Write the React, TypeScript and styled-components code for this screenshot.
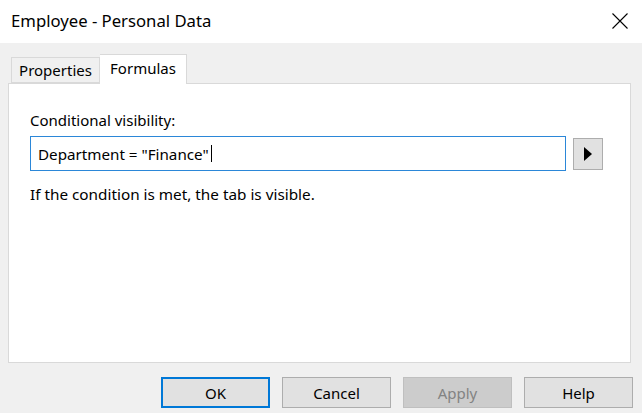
import React from "react";
import styled, { createGlobalStyle } from "styled-components";

const GlobalStyle = createGlobalStyle`
  html, body {
    margin: 0;
    padding: 0;
    background: #f0f0f0;
  }
  body {
    font-family: "Segoe UI", "Noto Sans", "DejaVu Sans", sans-serif;
    color: #000;
  }
`;

const Window = styled.div`
  width: 642px;
  height: 413px;
  background: #f0f0f0;
  display: flex;
  flex-direction: column;
  overflow: hidden;
`;

const TitleBar = styled.div`
  height: 43px;
  background: #ffffff;
  display: flex;
  align-items: center;
  justify-content: space-between;
  padding-left: 11px;
  box-sizing: border-box;
`;

const Title = styled.div`
  font-size: 16.7px;
  line-height: 22px;
  padding-bottom: 2px;
`;

const CloseButton = styled.button`
  width: 30px;
  height: 30px;
  margin-right: 7px;
  margin-bottom: 2px;
  border: none;
  background: transparent;
  display: flex;
  align-items: center;
  justify-content: center;
  padding: 0;
`;

const Body = styled.div`
  flex: 1;
  display: flex;
  flex-direction: column;
  padding: 11px 9px 0 8px;
`;

const TabStrip = styled.div`
  display: flex;
  align-items: flex-end;
  height: 29px;
  padding-left: 3px;
`;

const Tab = styled.div<{ $active?: boolean }>`
  box-sizing: border-box;
  height: ${(p) => (p.$active ? "30px" : "26px")};
  width: ${(p) => (p.$active ? "87px" : "89px")};
  margin-bottom: ${(p) => (p.$active ? "-1px" : "0")};
  background: ${(p) => (p.$active ? "#ffffff" : "#f0f0f0")};
  border: 1px solid #d9d9d9;
  border-bottom: ${(p) => (p.$active ? "none" : "1px solid #d9d9d9")};
  border-left: ${(p) => (p.$active ? "none" : "1px solid #d9d9d9")};
  font-size: 15px;
  display: flex;
  align-items: center;
  justify-content: center;
  padding-bottom: ${(p) => (p.$active ? "3px" : "0")};
  position: relative;
  z-index: ${(p) => (p.$active ? 1 : 0)};
`;

const Panel = styled.div`
  box-sizing: border-box;
  width: 623px;
  height: 280px;
  background: #ffffff;
  border: 1px solid #d9d9d9;
  padding: 27px 0 0 21px;
  display: flex;
  flex-direction: column;
`;

const FieldLabel = styled.div`
  font-size: 15px;
  line-height: 18px;
`;

const FieldRow = styled.div`
  display: flex;
  align-items: center;
  gap: 7px;
  margin-top: 7px;
`;

const FormulaInput = styled.div`
  box-sizing: border-box;
  width: 536px;
  height: 35px;
  border: 1px solid #2b87d8;
  background: #fff;
  display: flex;
  align-items: center;
  padding-left: 7px;
  font-size: 15.2px;
`;

const Caret = styled.span`
  display: inline-block;
  width: 1px;
  height: 17px;
  background: #000;
  margin-left: 2px;
`;

const ArrowButton = styled.button`
  box-sizing: border-box;
  width: 30px;
  height: 32px;
  background: #e1e1e1;
  border: 1px solid #adadad;
  padding: 0;
  display: flex;
  align-items: center;
  justify-content: center;
`;

const Hint = styled.div`
  font-size: 15.3px;
  line-height: 18px;
  margin-top: 14px;
`;

const ButtonRow = styled.div`
  display: flex;
  justify-content: flex-end;
  gap: 12px;
  margin-top: 14px;
`;

const DialogButton = styled.button<{ $default?: boolean; $disabled?: boolean }>`
  box-sizing: border-box;
  width: 109px;
  height: 31px;
  font-family: inherit;
  font-size: 15px;
  padding: 0;
  background: ${(p) => (p.$disabled ? "#cccccc" : "#e1e1e1")};
  color: ${(p) => (p.$disabled ? "#838383" : "#000000")};
  border: ${(p) =>
    p.$default ? "2px solid #0078d7" : p.$disabled ? "1px solid #bfbfbf" : "1px solid #adadad"};
`;

const App: React.FC = () => {
  return (
    <>
      <GlobalStyle />
      <Window>
        <TitleBar>
          <Title>Employee - Personal Data</Title>
          <CloseButton aria-label="Close">
            <svg width="16" height="16" viewBox="0 0 16 16">
              <path d="M0.5 0.5 L15.5 15.5 M15.5 0.5 L0.5 15.5" stroke="#000" strokeWidth="1.1" />
            </svg>
          </CloseButton>
        </TitleBar>
        <Body>
          <TabStrip>
            <Tab>Properties</Tab>
            <Tab $active>Formulas</Tab>
          </TabStrip>
          <Panel>
            <FieldLabel>Conditional visibility:</FieldLabel>
            <FieldRow>
              <FormulaInput>
                Department = "Finance"
                <Caret />
              </FormulaInput>
              <ArrowButton aria-label="Insert">
                <svg width="9" height="14" viewBox="0 0 9 14">
                  <path d="M0 0 L8 7 L0 14 Z" fill="#000" />
                </svg>
              </ArrowButton>
            </FieldRow>
            <Hint>If the condition is met, the tab is visible.</Hint>
          </Panel>
          <ButtonRow>
            <DialogButton $default>OK</DialogButton>
            <DialogButton>Cancel</DialogButton>
            <DialogButton $disabled>Apply</DialogButton>
            <DialogButton>Help</DialogButton>
          </ButtonRow>
        </Body>
      </Window>
    </>
  );
};

export default App;
